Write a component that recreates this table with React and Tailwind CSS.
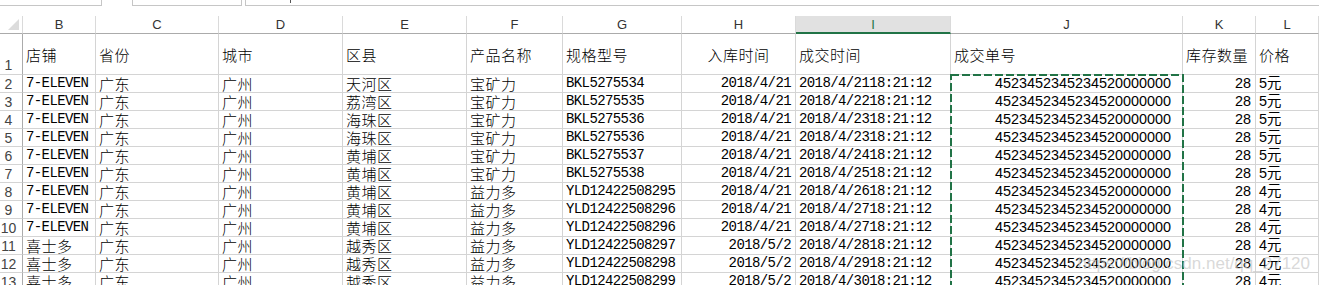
const MONO = "font-[family-name:'Liberation_Mono','Noto_Sans_CJK_SC',monospace] text-[14px] tracking-[-0.6px]";
const CJK = "font-[family-name:'Noto_Sans_CJK_SC',sans-serif] text-[15px] font-light tracking-[0.5px]";
const SANS = "font-[family-name:'Liberation_Sans','Noto_Sans_CJK_SC',sans-serif] text-[14.4px]";

const letters = ["B", "C", "D", "E", "F", "G", "H", "I", "J", "K", "L"];
const titles = ["店铺", "省份", "城市", "区县", "产品名称", "规格型号", "入库时间", "成交时间", "成交单号", "库存数量", "价格"];

// B, E, F, G, H, I, L
const rows = [
  ["7-ELEVEN", "天河区", "宝矿力", "BKL5275534", "2018/4/21", "2018/4/2118:21:12", "5元"],
  ["7-ELEVEN", "荔湾区", "宝矿力", "BKL5275535", "2018/4/21", "2018/4/2218:21:12", "5元"],
  ["7-ELEVEN", "海珠区", "宝矿力", "BKL5275536", "2018/4/21", "2018/4/2318:21:12", "5元"],
  ["7-ELEVEN", "海珠区", "宝矿力", "BKL5275536", "2018/4/21", "2018/4/2318:21:12", "5元"],
  ["7-ELEVEN", "黄埔区", "宝矿力", "BKL5275537", "2018/4/21", "2018/4/2418:21:12", "5元"],
  ["7-ELEVEN", "黄埔区", "宝矿力", "BKL5275538", "2018/4/21", "2018/4/2518:21:12", "5元"],
  ["7-ELEVEN", "黄埔区", "益力多", "YLD12422508295", "2018/4/21", "2018/4/2618:21:12", "4元"],
  ["7-ELEVEN", "黄埔区", "益力多", "YLD12422508296", "2018/4/21", "2018/4/2718:21:12", "4元"],
  ["7-ELEVEN", "黄埔区", "益力多", "YLD12422508296", "2018/4/21", "2018/4/2718:21:12", "4元"],
  ["喜士多", "越秀区", "益力多", "YLD12422508297", "2018/5/2", "2018/4/2818:21:12", "4元"],
  ["喜士多", "越秀区", "益力多", "YLD12422508298", "2018/5/2", "2018/4/2918:21:12", "4元"],
  ["喜士多", "越秀区", "益力多", "YLD12422508299", "2018/5/2", "2018/4/3018:21:12", "4元"],
];

function Cell({ children, font, right, center, extra = "" }) {
  let align = "pl-[3px]";
  if (right) align = "justify-end pr-[4px]";
  if (center) align = "justify-center";
  return (
    <div
      className={`flex items-center whitespace-nowrap border-r border-b border-[#d4d4d4] text-black leading-[17px] ${align} ${font} ${extra}`}
    >
      {children}
    </div>
  );
}

function RowNum({ n, bottom }) {
  return (
    <div
      className={`flex border-r border-b border-r-[#ababab] border-b-[#d4d4d4] font-[family-name:'Liberation_Sans',sans-serif] text-[14px] leading-[16px] text-[#444] ${
        bottom ? "items-end pb-[1px]" : "items-center"
      }`}
    >
      <span className="w-[17px] text-center">{n}</span>
    </div>
  );
}

export default function App() {
  return (
    <div className="relative w-[1319px] h-[285px] overflow-hidden bg-white">
      {/* formula bar remnants */}
      <div className="flex h-[16px]">
        <div className="w-[102px] h-[6px] border-r border-b border-[#c6c6c6]"></div>
        <div className="ml-[30px] w-[110px] h-[6px] border-x border-b border-[#c6c6c6]"></div>
        <div className="ml-[3px] flex-1 h-[6px] border-l border-b border-[#c6c6c6] pl-[44px]">
          <div className="w-[1px] h-[3px] bg-[#555]"></div>
        </div>
      </div>

      <div className="grid grid-cols-[23px_73px_123px_124px_124px_96px_119px_114px_155px_232px_73px_1fr] grid-rows-[18px_41px_repeat(12,18px)]">
        {/* column header */}
        <div className="flex items-end justify-end pr-[3px] pb-[3px] border-r border-b border-r-[#dadada] border-b-[#ababab]">
          <div className="w-0 h-0 border-l-[11px] border-l-transparent border-b-[11px] border-b-[#dcdcdc]"></div>
        </div>
        {letters.map((l) =>
          l === "I" ? (
            <div
              key={l}
              className="flex items-center justify-center bg-[#e1e1e1] border-r border-r-[#dadada] border-b-2 border-b-[#217346] font-[family-name:'Liberation_Sans',sans-serif] text-[13px] text-[#217346] leading-none"
            >
              {l}
            </div>
          ) : (
            <div
              key={l}
              className="flex items-center justify-center border-r border-b border-r-[#dadada] border-b-[#ababab] font-[family-name:'Liberation_Sans',sans-serif] text-[13px] text-[#333] leading-none"
            >
              {l}
            </div>
          )
        )}

        {/* row 1 titles */}
        <RowNum n={1} bottom />
        {titles.map((t, i) => (
          <Cell key={t} font={CJK} center={i === 6}>
            {t}
          </Cell>
        ))}

        {rows.map((r, i) => (
          <div key={i} className="contents">
            <RowNum n={i + 2} />
            <Cell font={r[0] === "喜士多" ? CJK : MONO}>{r[0]}</Cell>
            <Cell font={CJK}>广东</Cell>
            <Cell font={CJK}>广州</Cell>
            <Cell font={CJK}>{r[1]}</Cell>
            <Cell font={CJK}>{r[2]}</Cell>
            <Cell font={MONO}>{r[3]}</Cell>
            <Cell font={MONO} right>
              {r[4]}
            </Cell>
            <Cell font={MONO}>{r[5]}</Cell>
            <Cell font={SANS} right extra="pr-[11px]">
              4523452345234520000000
            </Cell>
            <Cell font={SANS} right>
              28
            </Cell>
            <Cell font={SANS}>{r[6]}</Cell>
          </div>
        ))}
      </div>

      {/* copy selection marquee */}
      <svg className="absolute left-[950px] top-[74px] pointer-events-none" width="234" height="230">
        <rect x="1" y="1" width="232" height="260" fill="none" stroke="#217346" strokeWidth="2" strokeDasharray="8 3" />
      </svg>

      {/* watermark */}
      <div className="absolute right-[9px] top-[251px] pointer-events-none font-[family-name:'Liberation_Sans',sans-serif] text-[17px] text-[#c8c8c8]/70 whitespace-nowrap">
        https://blog.csdn.net/qq_27120
      </div>
    </div>
  );
}
